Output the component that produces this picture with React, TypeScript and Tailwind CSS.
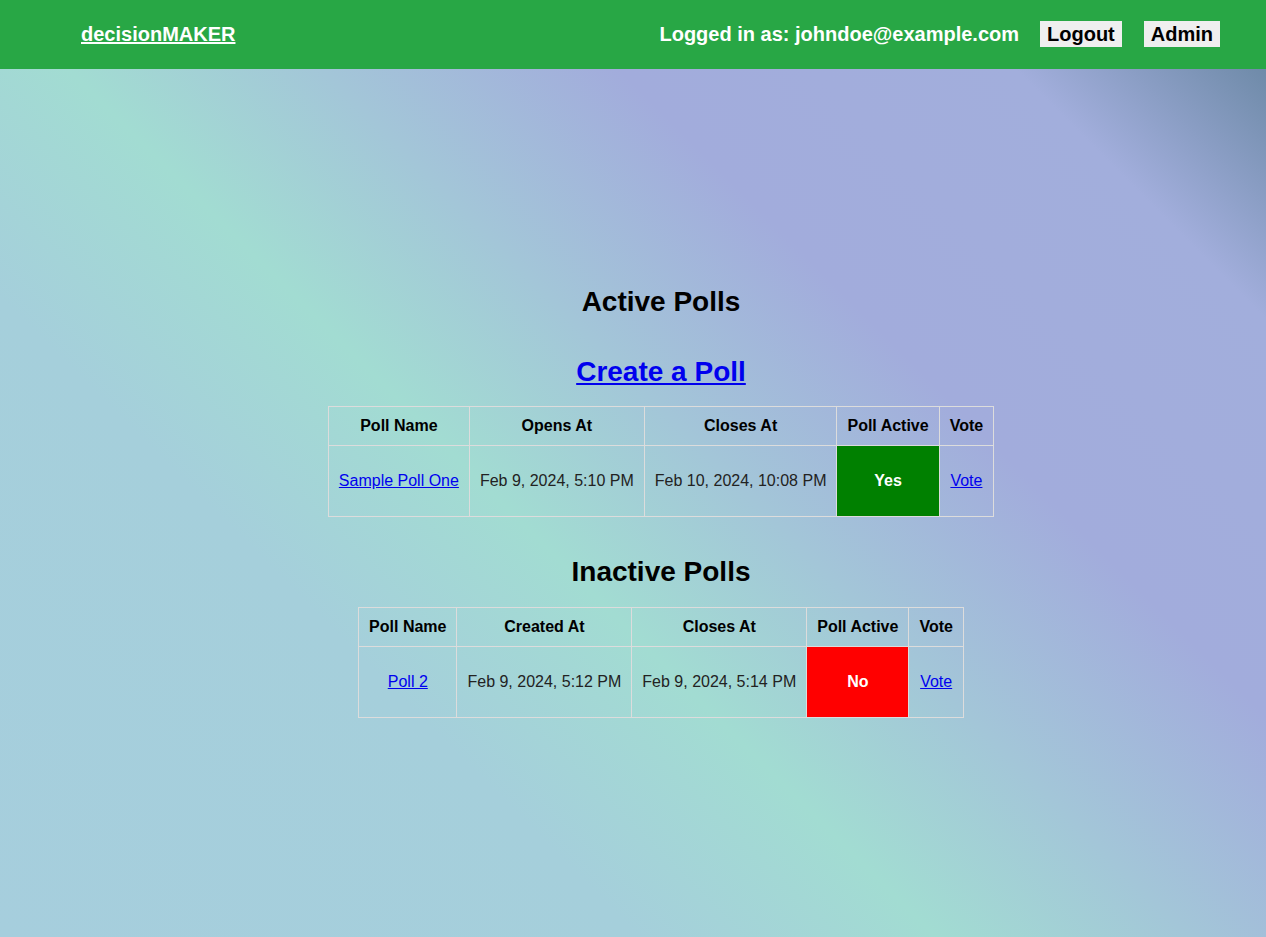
export default function App() {
  const active = [
    { name: "Sample Poll One", opens: "Feb 9, 2024, 5:10 PM", closes: "Feb 10, 2024, 10:08 PM" },
  ];
  const inactive = [
    { name: "Poll 2", created: "Feb 9, 2024, 5:12 PM", closes: "Feb 9, 2024, 5:14 PM" },
  ];

  const th = "border border-[#dcdcdc] px-[10px] py-[10px] text-[16px] leading-[18px] font-bold text-black";
  const td = "border border-[#dcdcdc] px-[10px] py-[26px] text-[16px] leading-[18px] text-[#222]";

  return (
    <div
      className="min-h-screen font-['Liberation_Sans',Arial,sans-serif]"
      style={{
        background:
          "linear-gradient(45deg, #a6cedd 0%, #a5cfdb 29%, #a2dcd2 42.5%, #a3c6d8 54%, #a2acdc 67.5%, #a2aedc 85.5%, #6e8aa8 97%, #6a87a5 100%)",
      }}
    >
      {/* top bar */}
      <header className="flex h-[69px] items-center justify-between bg-[#28a745] pl-[81px] pr-[46px]">
        <a href="#" className="-mt-[1px] text-[20px] font-bold text-white underline">
          decisionMAKER
        </a>
        <div className="-mt-[1px] flex items-center">
          <span className="text-[20px] font-bold text-white">Logged in as: johndoe@example.com</span>
          <button className="ml-[21px] h-[26px] bg-[#efefef] px-[7px] text-[20px] leading-[23px] font-bold text-black">
            Logout
          </button>
          <button className="ml-[22px] h-[26px] bg-[#efefef] px-[7px] text-[20px] leading-[23px] font-bold text-black">
            Admin
          </button>
        </div>
      </header>

      <main className="flex flex-col items-center pl-[56px] pt-[212px] pb-10">
        <h2 className="text-[28px] font-bold text-black">Active Polls</h2>
        <a href="#" className="mt-[28px] text-[28px] font-bold text-[#0000ee] underline">
          Create a Poll
        </a>

        <table className="mt-[13px] border-collapse text-center">
          <thead>
            <tr>
              <th className={th}>Poll Name</th>
              <th className={th}>Opens At</th>
              <th className={th}>Closes At</th>
              <th className={th}>Poll Active</th>
              <th className={th}>Vote</th>
            </tr>
          </thead>
          <tbody>
            {active.map((p) => (
              <tr key={p.name}>
                <td className={td}>
                  <a href="#" className="text-[#0000ee] underline">{p.name}</a>
                </td>
                <td className={td}>{p.opens}</td>
                <td className={td}>{p.closes}</td>
                <td className={td + " bg-[#008000] font-bold text-white"}>Yes</td>
                <td className={td}>
                  <a href="#" className="text-[#0000ee] underline">Vote</a>
                </td>
              </tr>
            ))}
          </tbody>
        </table>

        <h2 className="mt-[34px] text-[28px] font-bold text-black">Inactive Polls</h2>

        <table className="mt-[14px] border-collapse text-center">
          <thead>
            <tr>
              <th className={th}>Poll Name</th>
              <th className={th}>Created At</th>
              <th className={th}>Closes At</th>
              <th className={th}>Poll Active</th>
              <th className={th}>Vote</th>
            </tr>
          </thead>
          <tbody>
            {inactive.map((p) => (
              <tr key={p.name}>
                <td className={td}>
                  <a href="#" className="text-[#0000ee] underline">{p.name}</a>
                </td>
                <td className={td}>{p.created}</td>
                <td className={td}>{p.closes}</td>
                <td className={td + " bg-[#ff0000] font-bold text-white"}>No</td>
                <td className={td}>
                  <a href="#" className="text-[#0000ee] underline">Vote</a>
                </td>
              </tr>
            ))}
          </tbody>
        </table>
      </main>
    </div>
  );
}
